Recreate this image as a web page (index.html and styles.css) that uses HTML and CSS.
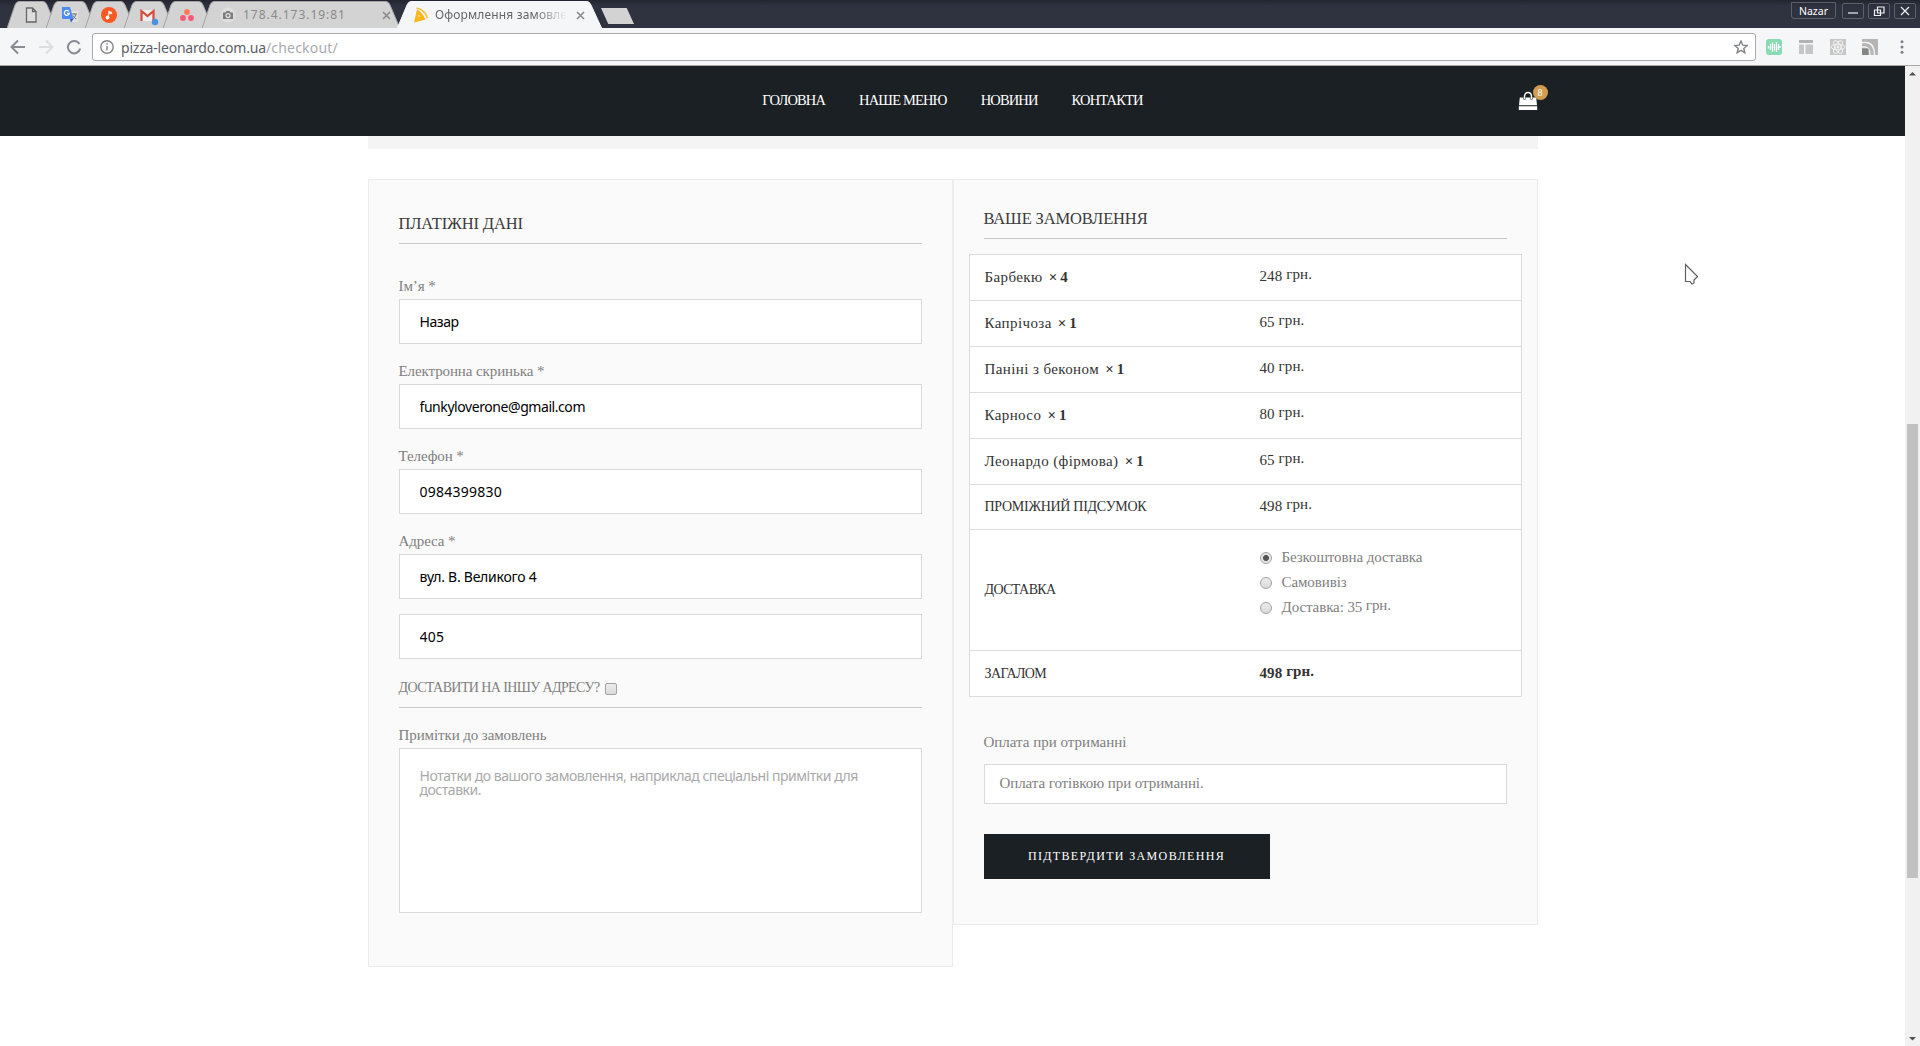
FILE: index.html
```html
<!DOCTYPE html>
<html lang="uk">
<head>
  <meta charset="UTF-8" />
  <meta name="viewport" content="width=device-width, initial-scale=1.0" />
  <title>Оформлення замовлення</title>
  <link rel="stylesheet" href="styles.css">
</head>
<body>
  <!-- Browser tabs -->
  <div class="tab-strip">
    <div class="tabs">
      <div class="tab">
        <svg class="tab-shape" viewBox="0 0 51 28"><path d="M0 28.5L8 5Q9.500 1.500 12 1.500H36Q38.500 1.500 40 5L50 28.500"/></svg>
        <svg class="tab-icon" viewBox="0 0 16 16"><path d="M3.500 1H9.500L13 4.500V15H3.500ZM9.500 1V4.500H13" fill="#ddd" stroke="#666" stroke-width="1.300"/></svg>
      </div>
      <div class="tab">
        <svg class="tab-shape" viewBox="0 0 51 28"><path d="M0 28.5L8 5Q9.500 1.500 12 1.500H36Q38.500 1.500 40 5L50 28.500"/></svg>
        <svg class="tab-icon" viewBox="0 0 16 16"><path d="M6 4H16V15H9Z" fill="#e2e2e2"/><path d="M0 0H8L11.500 12H1Q0 12 0 11Z" fill="#4c8bf5"/><path d="M8 12H11.500L9 15.500Z" fill="#2a56c6"/><path d="M6.800 4.300A2.500 2.500 0 1 0 7.300 6.300H5" fill="none" stroke="#fff" stroke-width="1.200"/><path d="M10 7H15M12.500 6V7M14 7Q13 11 10.500 12M11 8.500Q12 11 14.500 12" fill="none" stroke="#777"/></svg>
      </div>
      <div class="tab">
        <svg class="tab-shape" viewBox="0 0 51 28"><path d="M0 28.5L8 5Q9.500 1.500 12 1.500H36Q38.500 1.500 40 5L50 28.500"/></svg>
        <svg class="tab-icon" viewBox="0 0 16 16"><circle cx="8" cy="8" r="8" fill="#ff5722"/><circle cx="6.500" cy="10.500" r="1.900" fill="#fff"/><path d="M7.600 10.500V4L10.700 5.200V7L8.600 6.200" fill="#fff" stroke="#fff" stroke-width=".6"/></svg>
      </div>
      <div class="tab">
        <svg class="tab-shape" viewBox="0 0 51 28"><path d="M0 28.5L8 5Q9.500 1.500 12 1.500H36Q38.500 1.500 40 5L50 28.500"/></svg>
        <svg class="tab-icon" viewBox="0 0 16 16"><path d="M1 3H14V14H1Z" fill="#eee"/><path d="M1.500 14V4L7.500 9L13.500 4V14" fill="none" stroke="#d54b3d" stroke-width="2.200"/><circle cx="15" cy="15" r="3.200" fill="#4a90e2"/></svg>
      </div>
      <div class="tab">
        <svg class="tab-shape" viewBox="0 0 51 28"><path d="M0 28.5L8 5Q9.500 1.500 12 1.500H36Q38.500 1.500 40 5L50 28.500"/></svg>
        <svg class="tab-icon" viewBox="0 0 16 16"><circle cx="8" cy="5" r="2.900" fill="#ff7a5c"/><circle cx="4" cy="11" r="2.900" fill="#fb5779"/><circle cx="12" cy="11" r="2.900" fill="#fb5779"/></svg>
      </div>
      <div class="tab wide">
        <svg class="tab-shape" viewBox="0 0 199 28"><path d="M0 28.5L8 5Q9.500 1.500 12 1.500H184Q186.500 1.500 188 5L198 28.500"/></svg>
        <svg class="tab-icon" viewBox="0 0 16 16"><circle cx="8" cy="8" r="7.500" fill="#dedede"/><path d="M3 5.500H5.500L6.500 4H9.500L10.500 5.500H13V12H3Z" fill="#7d7d7d"/><circle cx="8" cy="8.600" r="2" fill="none" stroke="#e6e6e6" stroke-width="1.200"/></svg>
        <span class="tab-title ip">178.4.173.19:81</span>
        <svg class="tab-close" viewBox="0 0 9 9"><path d="M1 1L8 8M8 1L1 8"/></svg>
      </div>
      <div class="tab wide active">
        <svg class="tab-shape" viewBox="0 0 206 28"><path d="M0 29L10 5Q11.500 1.500 14 1.500H190Q192.500 1.500 194 5L205 29"/></svg>
        <svg class="tab-icon" viewBox="0 0 16 16"><path d="M4 2.500Q9 5 12.500 12.500L1 15.500Z" fill="#ffb516"/><path d="M3.500 1Q11.500 2.500 14.500 11" fill="none" stroke="#fbc02d" stroke-width="1.700"/><circle cx="6" cy="9" r="1" fill="#ffe08a"/></svg>
        <span class="tab-title fade">Оформлення замовле</span>
        <svg class="tab-close" viewBox="0 0 9 9"><path d="M1 1L8 8M8 1L1 8"/></svg>
      </div>
      <div class="new-tab"></div>
    </div>
    <div class="window-buttons">
      <div class="user">Nazar</div>
      <div class="win-btn"><svg viewBox="0 0 12 12"><path d="M1 8H11" stroke-width="2"/></svg></div>
      <div class="win-btn"><svg viewBox="0 0 12 12"><path d="M4.500 2H11V8H4.500ZM1.500 5H7.500V10.500H1.500Z"/></svg></div>
      <div class="win-btn"><svg viewBox="0 0 12 12"><path d="M2 2L10 10M10 2L2 10" stroke-width="1.600"/></svg></div>
    </div>
  </div>

  <!-- Toolbar with address bar -->
  <div class="toolbar">
    <svg class="tool-icon" viewBox="0 0 16 16"><path d="M15 8H2M8 1.500L1.500 8L8 14.500" stroke="#888b94"/></svg>
    <svg class="tool-icon" viewBox="0 0 16 16"><path d="M1 8H14M8 1.500L14.500 8L8 14.500" stroke="#dcdde0"/></svg>
    <svg class="tool-icon" viewBox="0 0 16 16"><path d="M13.500 5A6.200 6.200 0 1 0 14.200 9.500" stroke="#888b94"/><path d="M15 .5V7H8.500Z" fill="#888b94" stroke="none"/></svg>
    <div class="address">
      <svg class="info" viewBox="0 0 14 14"><circle cx="7" cy="7" r="6.200"/><path d="M7 6V10.500M7 3.300V4.800"/></svg>
      <span class="url">pizza-leonardo.com.ua<span class="path">/checkout/</span></span>
      <svg class="bookmark" viewBox="0 0 14 14"><path d="M7 1L8.800 5.200L13.200 5.500L9.800 8.400L10.900 12.800L7 10.400L3.100 12.800L4.200 8.400L.8 5.500L5.200 5.200Z"/></svg>
    </div>
    <div class="extensions">
      <svg viewBox="0 0 16 16"><rect width="16" height="16" rx="3" fill="#86dcb0"/><path d="M2.500 7V9.500M4.500 5V11M6.500 3.500V13M8.500 5V11.500M10.500 3V13M12.500 5V11M14 7V9" stroke="#fff" stroke-width="1.300"/></svg>
      <svg viewBox="0 0 16 16"><path d="M1 1H15V4H1ZM1 5.500H6V15H1ZM7.500 5.500H15V15H7.500Z" fill="#c6c6c6"/><path d="M1 1H15V4H1Z" fill="#b3b3b3"/></svg>
      <svg viewBox="0 0 16 16"><path d="M0 0H16V16H0Z" fill="#c6c6c6"/><g fill="none" stroke="#f2f2f2"><ellipse cx="8" cy="8" rx="7" ry="2.800"/><ellipse cx="8" cy="8" rx="7" ry="2.800" transform="rotate(60 8 8)"/><ellipse cx="8" cy="8" rx="7" ry="2.800" transform="rotate(120 8 8)"/></g><circle cx="8" cy="8" r="1.400" fill="#f2f2f2"/></svg>
      <svg viewBox="0 0 16 16"><path d="M0 0H16V16H0Z" fill="#b5b5b5"/><path d="M0 3.500H4Q12.500 4 12.500 16M0 8H3Q8 8.500 8 16" fill="none" stroke="#f0f0f0" stroke-width="1.400"/><path d="M0 9.500H6.500V16H0Z" fill="#858585"/></svg>
      <svg viewBox="0 0 16 16"><g fill="#7d8087"><circle cx="8" cy="2.700" r="1.500"/><circle cx="8" cy="8" r="1.500"/><circle cx="8" cy="13.300" r="1.500"/></g></svg>
    </div>
  </div>

  <div class="viewport">
    <div class="page">
      <header class="header">
        <div class="header-inner">
          <nav class="nav">
            <a>ГОЛОВНА</a>
            <a>НАШЕ МЕНЮ</a>
            <a>НОВИНИ</a>
            <a>КОНТАКТИ</a>
          </nav>
          <div class="cart">
            <svg viewBox="0 0 20 20"><path d="M1.800 6.500H18.200L19 14.300H1ZM.8 15.200H19.200V19H.8Z" fill="#fff"/><path d="M6.500 8.500V5Q7 1.500 10 1.500T13.500 5V8.500" fill="none" stroke="#1b2024" stroke-width="2.400"/><path d="M6.500 8V5Q7 1.500 10 1.500T13.500 5V8" fill="none" stroke="#fff" stroke-width="1.500"/></svg>
            <span class="badge">8</span>
          </div>
        </div>
      </header>

      <div class="notice"></div>

      <main class="checkout">
        <!-- Billing details -->
        <section class="panel billing">
          <h3>ПЛАТІЖНІ ДАНІ</h3>
          <div class="field">
            <label>Ім’я *</label>
            <input type="text" value="Назар">
          </div>
          <div class="field">
            <label>Електронна скринька *</label>
            <input type="text" value="funkyloverone@gmail.com">
          </div>
          <div class="field">
            <label>Телефон *</label>
            <input class="digits" type="text" value="0984399830">
          </div>
          <div class="field">
            <label>Адреса *</label>
            <input class="street" type="text" value="вул. В. Великого 4">
            <input class="digits second" type="text" value="405">
          </div>
          <div class="ship-other">ДОСТАВИТИ НА ІНШУ АДРЕСУ?<span class="checkbox"></span></div>
          <div class="field">
            <label>Примітки до замовлень</label>
            <textarea placeholder="Нотатки до вашого замовлення, наприклад спеціальні примітки для доставки."></textarea>
          </div>
        </section>

        <!-- Order review -->
        <section class="panel order">
          <h3>ВАШЕ ЗАМОВЛЕННЯ</h3>
          <div class="review">
            <div class="row"><div class="name">Барбекю <b>× 4</b></div><div class="price">248 <sup>грн.</sup></div></div>
            <div class="row"><div class="name">Капрічоза <b>× 1</b></div><div class="price">65 <sup>грн.</sup></div></div>
            <div class="row"><div class="name">Паніні з беконом <b>× 1</b></div><div class="price">40 <sup>грн.</sup></div></div>
            <div class="row"><div class="name">Карносо <b>× 1</b></div><div class="price">80 <sup>грн.</sup></div></div>
            <div class="row"><div class="name">Леонардо (фірмова) <b>× 1</b></div><div class="price">65 <sup>грн.</sup></div></div>
            <div class="row subtotal"><div class="caps">ПРОМІЖНИЙ ПІДСУМОК</div><div class="price">498 <sup>грн.</sup></div></div>
            <div class="row shipping">
              <div class="caps">ДОСТАВКА</div>
              <ul>
                <li><span class="radio checked"></span>Безкоштовна доставка</li>
                <li><span class="radio"></span>Самовивіз</li>
                <li><span class="radio"></span><span>Доставка: 35 <sup>грн.</sup></span></li>
              </ul>
            </div>
            <div class="row"><div class="caps">ЗАГАЛОМ</div><div class="price total">498 <sup>грн.</sup></div></div>
          </div>
          <div class="pay-label">Оплата при отриманні</div>
          <div class="pay-box">Оплата готівкою при отриманні.</div>
          <button class="submit">ПІДТВЕРДИТИ ЗАМОВЛЕННЯ</button>
        </section>
      </main>
    </div>

    <div class="scrollbar">
      <svg viewBox="0 0 15 15"><path d="M4 9.500H11L7.500 6Z"/></svg>
      <div class="track"><div class="thumb"></div></div>
      <svg viewBox="0 0 15 15"><path d="M4 6H11L7.500 9.500Z"/></svg>
    </div>
  </div>

  <svg class="cursor" viewBox="0 0 16 24"><path d="M1.500 1.500L13.500 13.500L10 17V20L8 21L6 18.500H1.500Z"/></svg>
</body>
</html>
```
FILE: styles.css
```css
* {
  margin: 0;
  padding: 0;
  box-sizing: border-box;
}
body {
  height: 100vh;
  display: flex;
  flex-direction: column;
  overflow: hidden;
  background: #fff;
  color: #808080;
  font-family: "Liberation Serif", serif;
  font-size: 15px;
}
svg {
  display: block;
  flex-shrink: 0;
}

/* Browser window */
.tab-strip {
  height: 28px;
  display: flex;
  justify-content: space-between;
  background: linear-gradient(#23242f, #2e323f 6px, #2f3340);
  font-family: "Noto Sans", sans-serif;
}
.tabs {
  display: flex;
  padding-left: 7px;
}
.tab {
  position: relative;
  width: 51px;
  height: 28px;
  margin-right: -12px;
  padding-left: 16px;
  display: flex;
  align-items: center;
}
.tab-shape {
  position: absolute;
  left: 0;
  top: 0;
  width: 100%;
  height: 28px;
}
.tab-shape path {
  fill: #d3d3d3;
  stroke: #a3a3a3;
}
.tab-icon {
  position: relative;
  width: 16px;
  height: 16px;
  margin-top: 2px;
  overflow: visible;
}
.tab.wide {
  width: 199px;
  margin-right: -4px;
  padding-left: 18px;
}
.tab.wide.active {
  width: 206px;
  margin-right: -2px;
  padding-left: 16px;
}
.active .tab-shape path {
  fill: #f5f6f8;
  stroke: #f5f6f8;
}
.tab-title {
  position: relative;
  margin: 2px 0 0 6px;
  width: 132px;
  white-space: nowrap;
  font-size: 12px;
  line-height: 18px;
  color: #666;
}
.tab-title.ip {
  margin-left: 7px;
  color: #8a8a8a;
  letter-spacing: .97px;
}
.tab-title.fade {
  letter-spacing: .15px;
  -webkit-mask-image: linear-gradient(to right, #000 100px, transparent 132px);
  mask-image: linear-gradient(to right, #000 100px, transparent 132px);
}
.tab-close {
  position: relative;
  width: 9px;
  height: 9px;
  margin: 2px 0 0 9px;
}
.ip + .tab-close {
  margin-left: 7px;
}
.tab-close path {
  stroke: #8b8b8f;
  stroke-width: 1.6;
}
.new-tab {
  width: 33px;
  height: 16px;
  margin-top: 8px;
  background: #d3d3d3;
  clip-path: polygon(0 0, 78% 0, 100% 100%, 22% 100%);
}
.window-buttons {
  display: flex;
  gap: 4px;
  padding: 3px 4px 0 0;
}
.user {
  width: 45px;
  height: 17px;
  margin: -1px 2px 0 0;
  border: 1px solid #5c606b;
  border-radius: 0 0 3px 3px;
  color: #fff;
  font-size: 10.5px;
  line-height: 17px;
  text-align: center;
}
.win-btn {
  width: 22px;
  height: 16px;
  display: flex;
  justify-content: center;
  align-items: center;
  border: 1px solid #5c606b;
  border-radius: 2px;
}
.win-btn svg {
  width: 12px;
  height: 12px;
}
.win-btn path {
  fill: none;
  stroke: #f0f0f0;
  stroke-width: 1.2;
}
.toolbar {
  height: 38px;
  display: flex;
  align-items: center;
  padding: 1px 10px 0 10px;
  background: #f5f6f8;
  border-bottom: 1px solid #a8a8a8;
}
.tool-icon {
  width: 16px;
  height: 16px;
  margin-right: 12px;
}
.tool-icon path {
  fill: none;
  stroke-width: 2;
}
.address {
  flex: 1;
  height: 28px;
  margin: 0 10px 0 -2px;
  padding: 0 7px;
  display: flex;
  align-items: center;
  background: #fff;
  border: 1px solid #a9a9a9;
  border-radius: 3px;
}
.info,
.bookmark {
  width: 14px;
  height: 14px;
  fill: none;
  stroke: #808389;
  stroke-width: 1.4;
}
.url {
  flex: 1;
  margin-left: 7px;
  font-family: "Noto Sans", sans-serif;
  font-size: 14px;
  letter-spacing: -.2px;
  color: #5b5e66;
}
.path {
  color: #a8abb0;
  letter-spacing: .2px;
}
.extensions {
  display: flex;
  gap: 16px;
}
.extensions svg {
  width: 16px;
  height: 16px;
}
.viewport {
  flex: 1;
  display: flex;
}
.page {
  flex: 1;
}
.scrollbar {
  width: 15px;
  display: flex;
  flex-direction: column;
  background: #f1f1f1;
}
.scrollbar svg {
  width: 15px;
  height: 15px;
  fill: #505050;
}
.track {
  flex: 1;
  padding: 343px 2px 0;
}
.thumb {
  height: 454px;
  background: #c1c1c1;
}

/* Header */
.header {
  height: 70px;
  background: #1b2024;
}
.header-inner {
  width: 1170px;
  height: 70px;
  margin: 0 auto;
  display: grid;
  grid-template-columns: 1fr auto 1fr;
  align-items: center;
}
.nav {
  grid-column: 2;
  display: flex;
  gap: 34px;
  padding-bottom: 2px;
  color: #fff;
  font-size: 14.5px;
  letter-spacing: -.85px;
}
.cart {
  position: relative;
  justify-self: end;
  width: 20px;
  height: 20px;
}
.badge {
  position: absolute;
  left: 15px;
  top: -6px;
  width: 15px;
  height: 15px;
  border-radius: 50%;
  background: #d19d50;
  color: #fff;
  font-size: 10px;
  line-height: 15px;
  text-align: center;
}

/* Checkout */
.notice {
  width: 1170px;
  height: 13px;
  margin: 0 auto 30px;
  background: #f4f4f4;
}
.checkout {
  width: 1170px;
  margin: 0 auto;
  display: flex;
  align-items: flex-start;
}
.panel {
  width: 585px;
  padding: 0 30px;
  background: #fafafa;
  border: 1px solid #ececec;
}
.billing {
  padding-top: 31px;
  padding-bottom: 53px;
}
.order {
  padding-top: 26px;
  padding-bottom: 45px;
}
h3 {
  padding: 1px 0 7px;
  border-bottom: 1px solid #c8c8c8;
  color: #3a3a3a;
  font-size: 16.5px;
  font-weight: normal;
  line-height: 24px;
  letter-spacing: -.13px;
}
.billing h3 {
  margin-bottom: 32px;
}
.field {
  display: flex;
  flex-direction: column;
  margin-bottom: 17px;
}
.field label {
  margin-bottom: 3px;
  line-height: 20px;
  letter-spacing: -.1px;
}
.field input,
.field textarea {
  width: 523px;
  height: 45px;
  padding: 0 20px;
  border: 1px solid #d9d9d9;
  background: #fff;
  color: #000;
  font-family: "Noto Sans", sans-serif;
  font-size: 14px;
  letter-spacing: -.43px;
}
.field .digits {
  letter-spacing: .25px;
}
.field .street {
  letter-spacing: -.25px;
}
.field .second {
  margin-top: 15px;
}
.field textarea {
  height: 165px;
  padding-top: 20px;
  line-height: 14px;
  letter-spacing: -.47px;
  resize: none;
}
.field textarea::placeholder {
  color: #a9a9a9;
}
.ship-other {
  display: flex;
  align-items: center;
  margin: 19px 0 17px;
  padding-bottom: 9px;
  border-bottom: 1px solid #c8c8c8;
  font-size: 14px;
  line-height: 20px;
  letter-spacing: -.6px;
}
.billing .field:last-child {
  margin-bottom: 0;
}
.checkbox {
  width: 12px;
  height: 12px;
  margin: 2px 0 0 5px;
  border: 1px solid #a2a2a2;
  border-radius: 2px;
  background: linear-gradient(#ececec, #dadada);
}
.review {
  margin: 15px -15px 35px;
  background: #fff;
  border: 1px solid #dcdcdc;
  color: #333;
}
.row {
  height: 46px;
  display: grid;
  grid-template-columns: 275px 1fr;
  align-items: center;
  padding-left: 15px;
  border-bottom: 1px solid #dcdcdc;
  line-height: 20px;
}
.row:last-child {
  height: 45px;
  border-bottom: none;
}
.name {
  padding-bottom: 1px;
  letter-spacing: .4px;
}
.name b {
  margin-left: 2px;
  letter-spacing: -.4px;
}
.price {
  padding-bottom: 3px;
  letter-spacing: .1px;
}
.subtotal .price {
  padding-bottom: 2px;
}
.price.total {
  padding-bottom: 1px;
  font-weight: bold;
}
sup {
  position: relative;
  top: -2px;
  font-size: 15px;
  line-height: 0;
  vertical-align: baseline;
}
.caps {
  font-size: 14px;
  letter-spacing: -.6px;
}
.row.subtotal {
  height: 45px;
}
.subtotal .caps {
  letter-spacing: -.28px;
}
.row.shipping {
  height: 121px;
}
.shipping ul {
  padding: 15px 0 30px;
  list-style: none;
  color: #808080;
}
.shipping li {
  display: flex;
  align-items: center;
  line-height: 25px;
  letter-spacing: -.1px;
}
.radio {
  width: 12px;
  height: 12px;
  margin: 1px 10px 0 0;
  border: 1px solid #a2a2a2;
  border-radius: 50%;
  background: linear-gradient(#ececec, #dadada);
}
.radio.checked {
  background: radial-gradient(circle, #555 0 2.6px, #e6e6e6 3.4px);
}
.pay-label {
  margin-bottom: 12px;
  line-height: 20px;
  letter-spacing: 0;
}
.pay-box {
  height: 40px;
  padding-left: 15px;
  background: #fff;
  border: 1px solid #d9d9d9;
  line-height: 37px;
  letter-spacing: -.08px;
}
.submit {
  display: block;
  width: 286px;
  height: 45px;
  margin-top: 30px;
  border: none;
  background: #1b2024;
  color: #fff;
  font-family: inherit;
  font-size: 12px;
  letter-spacing: 1.35px;
}

/* Mouse pointer */
.cursor {
  position: absolute;
  left: 1684px;
  top: 263px;
  width: 16px;
  height: 24px;
  fill: #fff;
  stroke: #5f5f5f;
  stroke-width: 1.2;
}
```
